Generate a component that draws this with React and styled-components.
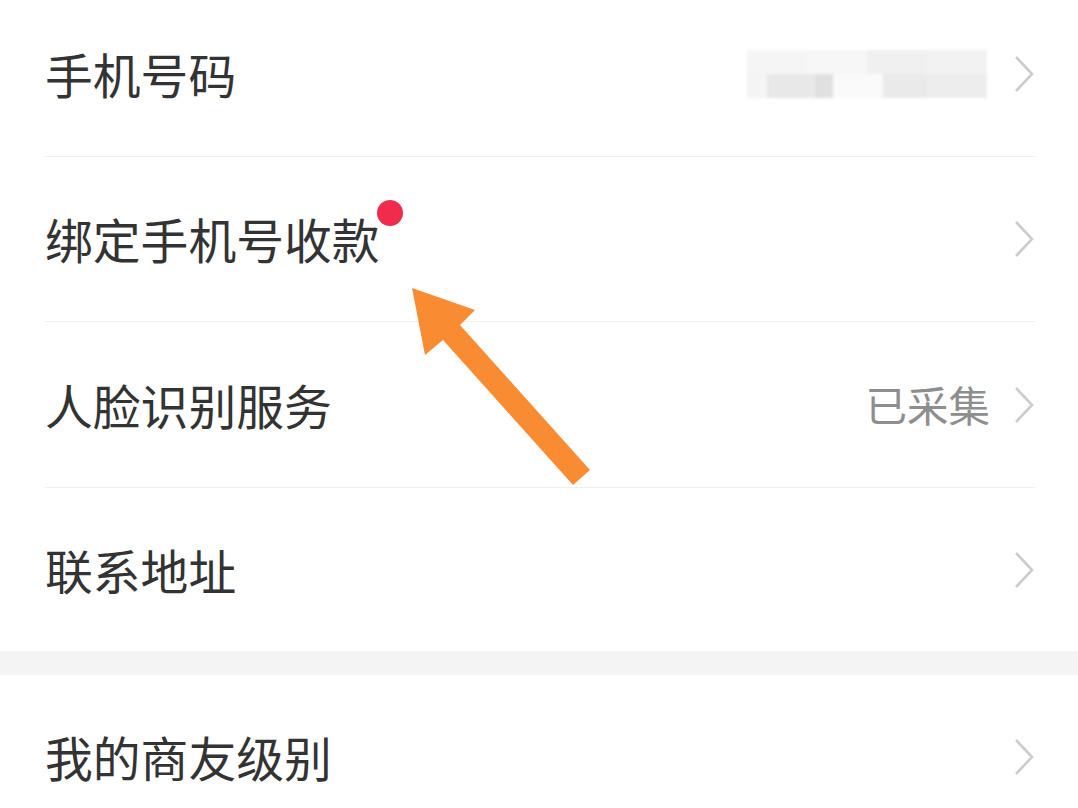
import React from "react"
import styled, { createGlobalStyle } from "styled-components"

const GlobalStyle = createGlobalStyle`
  html, body {
    margin: 0;
    padding: 0;
    background: #ffffff;
    overflow: hidden;
  }
  body {
    font-family: "Noto Sans CJK SC", "Noto Sans", sans-serif;
  }
`

const Page = styled.div`
  position: relative;
  width: 1078px;
  height: 808px;
  overflow: hidden;
  background: #ffffff;
`

const Group = styled.div`
  padding: 0 43px 0 45px;
  background: #ffffff;
  margin-top: ${p => p.$offset || 0}px;
`

const Row = styled.div`
  display: flex;
  align-items: center;
  height: ${p => p.$h || 164}px;
  border-bottom: ${p => (p.$last ? "none" : "1px solid #efefef")};
`

const Label = styled.div`
  position: relative;
  flex: 1;
  font-size: 47.8px;
  color: #333333;
  line-height: 1;
`

const LabelText = styled.span`
  position: relative;
`

const Dot = styled.span`
  position: absolute;
  right: -23px;
  top: -4px;
  width: 26px;
  height: 26px;
  border-radius: 50%;
  background: #f12b4c;
`

const Value = styled.div`
  font-size: 41.5px;
  color: #8e8e8e;
  margin-right: 23px;
  line-height: 1;
`

const Chevron = styled.svg`
  width: 22px;
  height: 38px;
  flex: none;
`

const Gap = styled.div`
  height: 24px;
  background: #f4f4f4;
`

const Masked = styled.div`
  display: flex;
  flex-direction: column;
  width: 240px;
  height: 48px;
  margin-right: 26px;
  filter: blur(1.5px);
`

const MaskLine = styled.div`
  display: flex;
  flex: 1;
`

const MaskBlock = styled.div`
  width: ${p => p.$w}px;
  background: ${p => p.$c};
`

const Arrow = styled.svg`
  position: absolute;
  left: 0;
  top: 0;
  width: 1078px;
  height: 808px;
  pointer-events: none;
`

const Arrowhead = () => (
  <Chevron viewBox="0 0 22 38">
    <polyline points="3,2 19,19 3,36" fill="none" stroke="#cccccc" strokeWidth="2.6" />
  </Chevron>
)

const topMask = [
  [60, "#f5f5f5"], [60, "#f7f7f7"], [60, "#f0f0f0"], [60, "#f2f2f2"],
]
const bottomMask = [
  [20, "#f4f4f4"], [48, "#e8e8e8"], [18, "#e0e0e0"], [50, "#fafafa"], [44, "#eaeaea"], [60, "#ededed"],
]

export default function App() {
  return (
    <Page>
      <GlobalStyle />
      <Group $offset={-8}>
        <Row>
          <Label>手机号码</Label>
          <Masked>
            <MaskLine>
              {topMask.map(([w, c], i) => <MaskBlock key={i} $w={w} $c={c} />)}
            </MaskLine>
            <MaskLine>
              {bottomMask.map(([w, c], i) => <MaskBlock key={i} $w={w} $c={c} />)}
            </MaskLine>
          </Masked>
          <Arrowhead />
        </Row>
        <Row>
          <Label>
            <LabelText>
              绑定手机号收款
              <Dot />
            </LabelText>
          </Label>
          <Arrowhead />
        </Row>
        <Row $h={165}>
          <Label>人脸识别服务</Label>
          <Value>已采集</Value>
          <Arrowhead />
        </Row>
        <Row $h={163} $last>
          <Label>联系地址</Label>
          <Arrowhead />
        </Row>
      </Group>
      <Gap />
      <Group>
        <Row $last>
          <Label>我的商友级别</Label>
          <Arrowhead />
        </Row>
      </Group>
      <Arrow viewBox="0 0 1078 808">
        <polygon
          points="412,288 475,310 460,325 590,470 573,485 443,340 425,355"
          fill="#f98b33"
        />
      </Arrow>
    </Page>
  )
}
